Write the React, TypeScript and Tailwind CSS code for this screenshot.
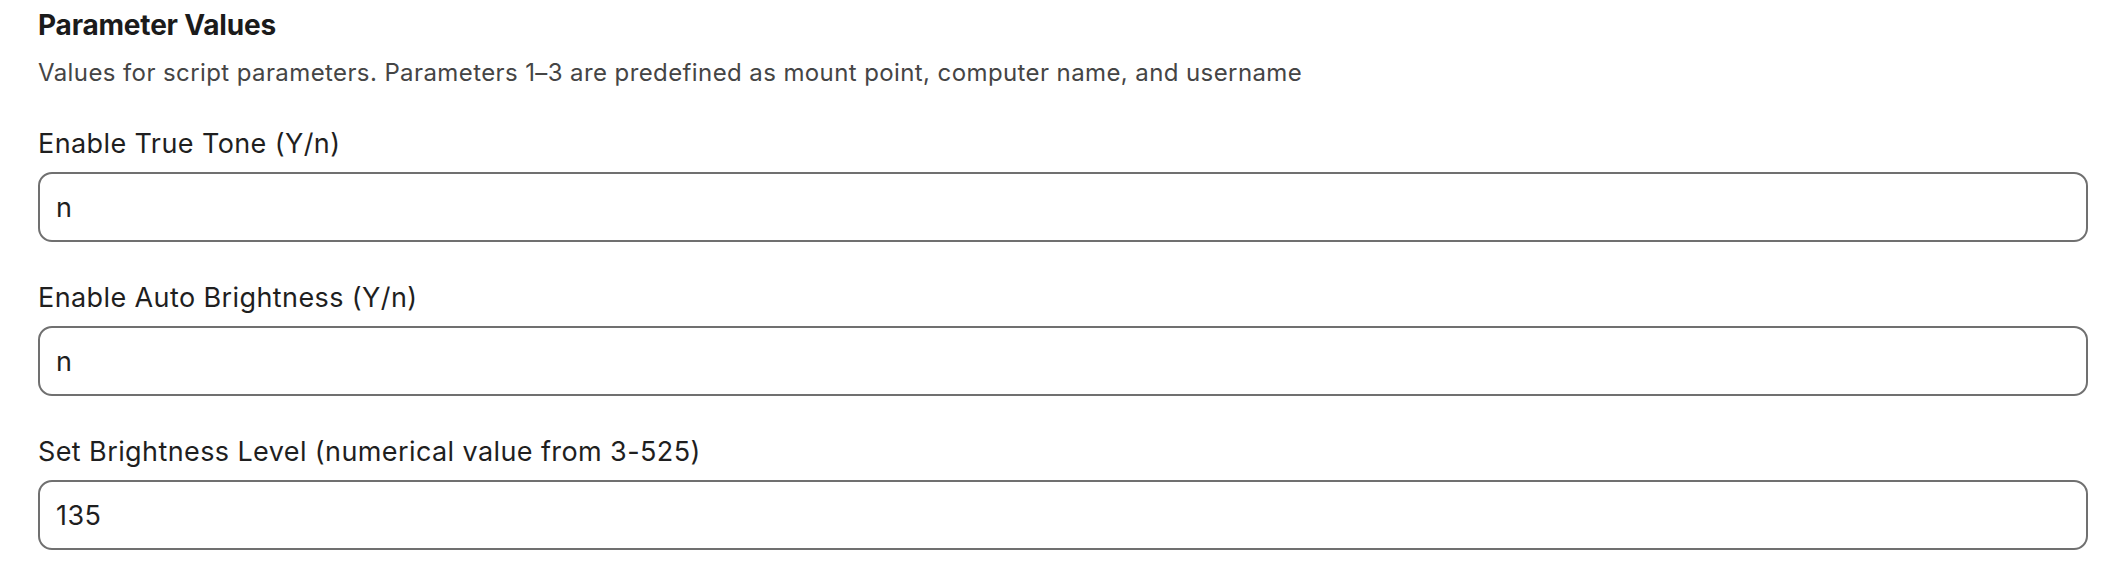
const fields = [
  { label: "Enable True Tone (Y/n)", value: "n" },
  { label: "Enable Auto Brightness (Y/n)", value: "n" },
  { label: "Set Brightness Level (numerical value from 3-525)", value: "135" },
];

const App = () => {
  return (
    <div className="min-h-screen bg-white pl-[38px] pr-[24px] pt-[8px] font-['Inter',sans-serif]">
      <h2 className="text-[28px] leading-[35px] font-bold text-[#1b1b1b] tracking-[-0.2px]">Parameter Values</h2>
      <p className="mt-[15px] text-[24px] leading-[30px] tracking-[0.4px] text-[#454545]">
        Values for script parameters. Parameters 1–3 are predefined as mount point, computer name, and username
      </p>

      <div className="mt-[40px] flex flex-col gap-[40px]">
        {fields.map((f) => (
          <div key={f.label} className="flex flex-col">
            <label className="text-[27px] leading-[32px] tracking-[0.4px] text-[#1f1f1f] mb-[12px]">{f.label}</label>
            <input
              type="text"
              defaultValue={f.value}
              className="h-[70px] w-full rounded-[14px] border-2 border-[#707070] bg-white px-[16px] text-[27px] tracking-[0.4px] text-[#1f1f1f] outline-none"
            />
          </div>
        ))}
      </div>
    </div>
  );
};

export default App;
